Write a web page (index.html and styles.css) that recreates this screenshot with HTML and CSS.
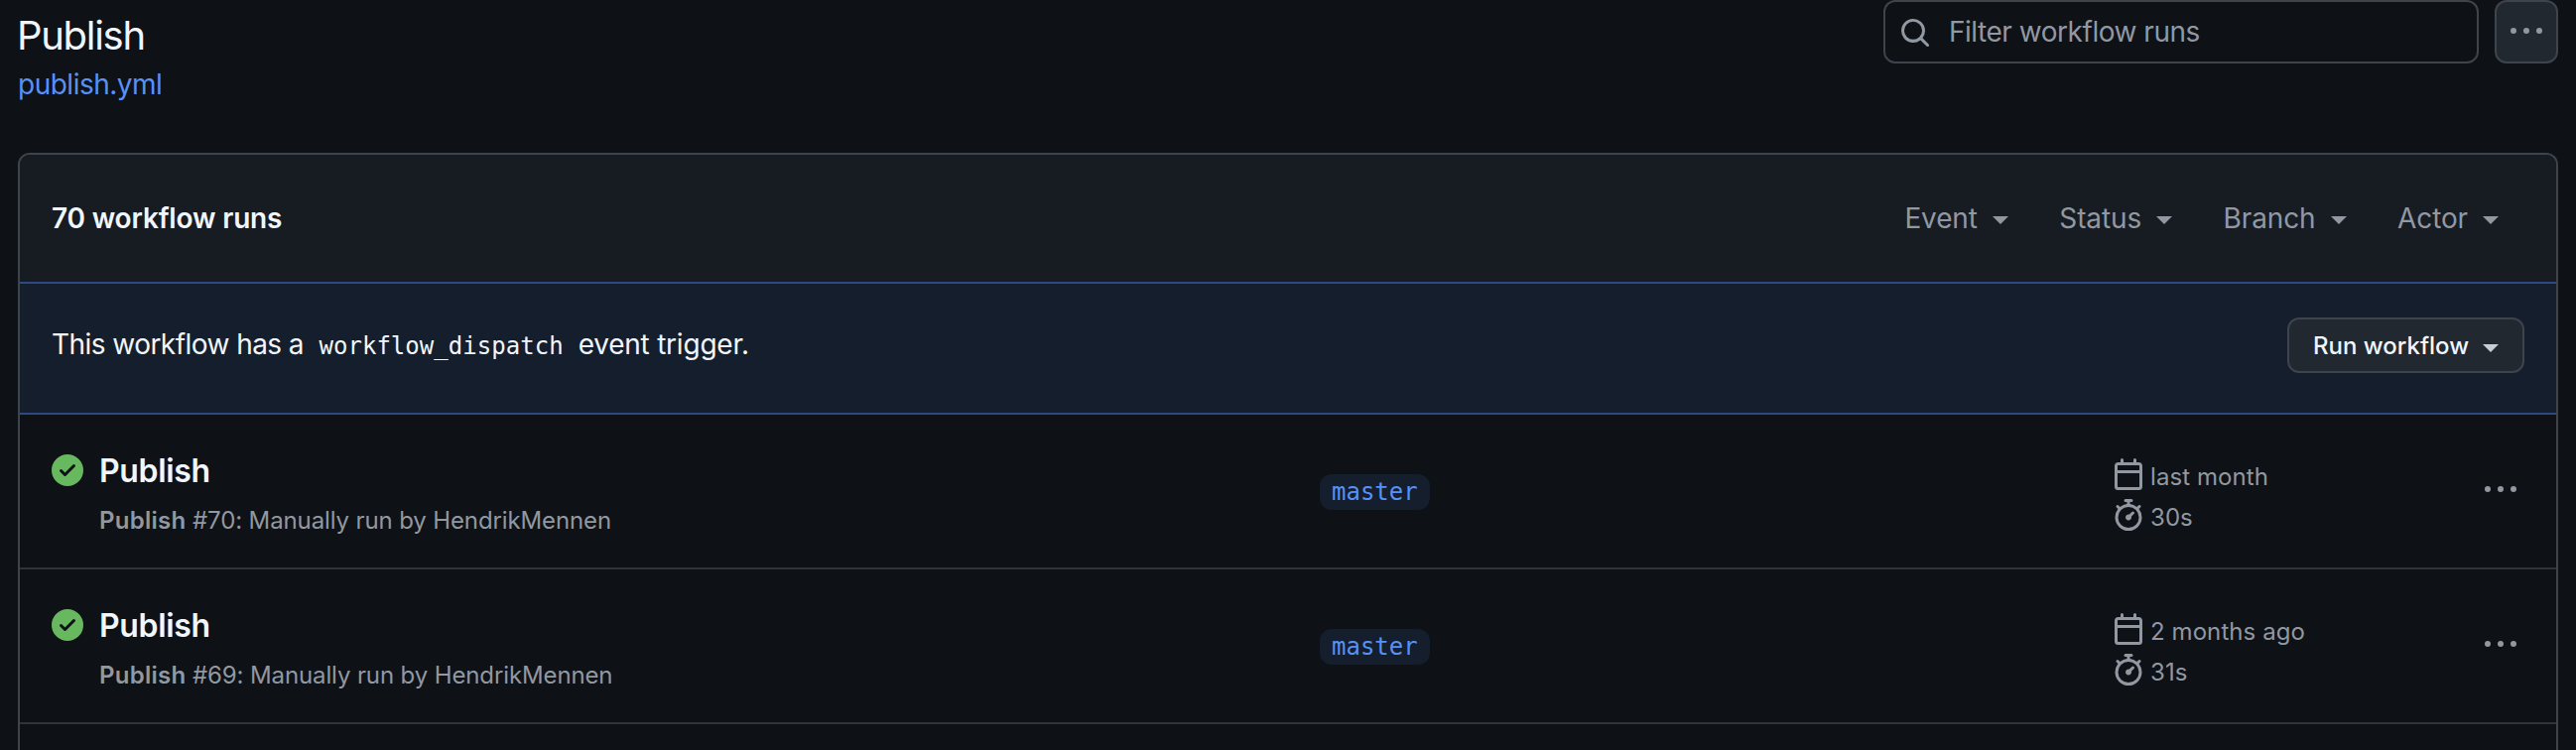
FILE: index.html
```
<!DOCTYPE html>
<html lang="en">
<head>
<meta charset="utf-8">
<title>Publish · Workflow runs</title>
<link rel="stylesheet" href="styles.css">
</head>
<body>
<svg class="sprite" aria-hidden="true">
  <symbol id="i-search" viewBox="0 0 16 16"><path d="M10.68 11.74a6 6 0 0 1-7.922-8.982 6 6 0 0 1 8.982 7.922l3.04 3.04a.749.749 0 0 1-.326 1.275.749.749 0 0 1-.734-.215ZM11.5 7a4.499 4.499 0 1 0-8.997 0A4.499 4.499 0 0 0 11.5 7Z"/></symbol>
  <symbol id="i-dots" viewBox="0 0 16 16"><path d="M8 9a1.5 1.5 0 1 0 0-3 1.5 1.5 0 0 0 0 3ZM1.5 9a1.5 1.5 0 1 0 0-3 1.5 1.5 0 0 0 0 3Zm13 0a1.5 1.5 0 1 0 0-3 1.5 1.5 0 0 0 0 3Z"/></symbol>
  <symbol id="i-check" viewBox="0 0 16 16"><path fill-rule="evenodd" d="M8 16A8 8 0 1 1 8 0a8 8 0 0 1 0 16Zm3.78-9.72a.751.751 0 0 0-.018-1.042.751.751 0 0 0-1.042-.018L6.75 9.19 5.28 7.72a.751.751 0 0 0-1.042.018.751.751 0 0 0-.018 1.042l2 2a.75.75 0 0 0 1.06 0Z"/></symbol>
  <symbol id="i-calendar" viewBox="0 0 16 16"><path d="M4.75 0a.75.75 0 0 1 .75.75V2h5V.75a.75.75 0 0 1 1.5 0V2h1.25c.966 0 1.75.784 1.75 1.75v10.5A1.75 1.75 0 0 1 13.25 16H2.75A1.75 1.75 0 0 1 1 14.25V3.75C1 2.784 1.784 2 2.75 2H4V.75A.75.75 0 0 1 4.75 0ZM2.5 7.5v6.75c0 .138.112.25.25.25h10.5a.25.25 0 0 0 .25-.25V7.5Zm10.75-4H2.75a.25.25 0 0 0-.25.25V6h11V3.75a.25.25 0 0 0-.25-.25Z"/></symbol>
  <symbol id="i-stopwatch" viewBox="0 0 16 16"><path d="M5.75.75A.75.75 0 0 1 6.5 0h3a.75.75 0 0 1 0 1.5h-.75v1l-.001.041a6.724 6.724 0 0 1 3.464 1.435l.007-.006.75-.75a.749.749 0 0 1 1.275.326.749.749 0 0 1-.215.734l-.75.75-.006.007a6.75 6.75 0 1 1-10.548 0L2.72 5.03l-.75-.75a.751.751 0 0 1 .018-1.042.751.751 0 0 1 1.042-.018l.75.75.007.006A6.72 6.72 0 0 1 7.25 2.541V1.5H6.5a.75.75 0 0 1-.75-.75ZM8 14.5a5.25 5.25 0 1 0-.001-10.501A5.25 5.25 0 0 0 8 14.5Zm.389-6.7 1.33-1.33a.75.75 0 1 1 1.061 1.06L9.45 8.861A1.503 1.503 0 0 1 8 10.75a1.499 1.499 0 1 1 .389-2.95Z"/></symbol>
</svg>

<header class="page-head">
  <div class="heading">
    <h1 class="title">Publish</h1>
    <a class="file-link">publish.yml</a>
  </div>
  <div class="search"><svg class="icon"><use href="#i-search"/></svg><span>Filter workflow runs</span></div>
  <button class="more-button"><svg class="icon"><use href="#i-dots"/></svg></button>
</header>

<main class="box">
  <div class="box-head">
    <strong class="count">70 workflow runs</strong>
    <nav class="filters">
      <span class="filter">Event<i class="caret"></i></span>
      <span class="filter">Status<i class="caret"></i></span>
      <span class="filter">Branch<i class="caret"></i></span>
      <span class="filter">Actor<i class="caret"></i></span>
    </nav>
  </div>
  <div class="dispatch">
    <p class="dispatch-text"><span class="lead">This workflow has a</span> <code>workflow_dispatch</code> <span class="tail">event trigger.</span></p>
    <button class="run-button">Run workflow<i class="caret"></i></button>
  </div>
  <article class="run">
    <div class="run-main">
      <svg class="icon check"><use href="#i-check"/></svg>
      <div class="run-info">
        <h2 class="run-title">Publish</h2>
        <p class="run-sub"><b>Publish</b> #70: Manually run by HendrikMennen</p>
      </div>
    </div>
    <span class="branch">master</span>
    <div class="meta">
      <div class="meta-line"><svg class="icon"><use href="#i-calendar"/></svg><span>last month</span></div>
      <div class="meta-line"><svg class="icon"><use href="#i-stopwatch"/></svg><span>30s</span></div>
    </div>
    <svg class="icon run-more"><use href="#i-dots"/></svg>
  </article>
  <article class="run">
    <div class="run-main">
      <svg class="icon check"><use href="#i-check"/></svg>
      <div class="run-info">
        <h2 class="run-title">Publish</h2>
        <p class="run-sub"><b>Publish</b> #69: Manually run by HendrikMennen</p>
      </div>
    </div>
    <span class="branch">master</span>
    <div class="meta">
      <div class="meta-line"><svg class="icon"><use href="#i-calendar"/></svg><span>2 months ago</span></div>
      <div class="meta-line"><svg class="icon"><use href="#i-stopwatch"/></svg><span>31s</span></div>
    </div>
    <svg class="icon run-more"><use href="#i-dots"/></svg>
  </article>
</main>
</body>
</html>
```
FILE: styles.css
```
* { box-sizing: border-box; }

body {
  margin: 0;
  height: 756px;
  display: flex;
  flex-direction: column;
  padding: 0 18px;
  background: #0e1116;
  color: #f0f6fc;
  font-family: Inter, "Noto Sans", sans-serif;
  font-size: 28px;
  white-space: nowrap;
}

h1, h2, p { margin: 0; }

button {
  font: inherit;
  color: inherit;
  padding: 0;
}

.sprite { display: none; }

.icon {
  flex: none;
  width: 32px;
  height: 32px;
  fill: #9198a1;
}

.caret {
  flex: none;
  border: 8px solid transparent;
  border-top-color: currentColor;
  border-bottom: 0;
}

.page-head {
  flex: none;
  height: 154px;
  display: flex;
  align-items: flex-start;
  gap: 16px;
}

.heading {
  flex: 1;
  padding-top: 7px;
}

.title {
  margin-left: -1px;
  font-size: 40px;
  font-weight: 400;
  line-height: 57px;
  letter-spacing: -1.3px;
}

.file-link {
  display: block;
  line-height: 42px;
  letter-spacing: -0.5px;
  color: #5891f6;
}

.search {
  width: 600px;
  height: 64px;
  display: flex;
  align-items: center;
  gap: 18px;
  padding: 2px 0 0 14px;
  border: 2px solid #3e444c;
  border-radius: 12px;
  color: #9198a1;
  line-height: 60px;
  letter-spacing: -0.47px;
}

.search span { margin-top: -2px; }

.more-button {
  width: 64px;
  height: 64px;
  display: flex;
  align-items: center;
  justify-content: center;
  background: #22282f;
  border: 2px solid #3e444c;
  border-radius: 12px;
}

.box {
  flex: none;
  height: 602px;
  border: 2px solid #3e444c;
  border-bottom: 0;
  border-radius: 12px 12px 0 0;
  overflow: hidden;
}

.box-head {
  height: 128px;
  display: flex;
  align-items: center;
  justify-content: space-between;
  padding: 0 58px 0 32px;
  background: #171b22;
}

.count {
  font-weight: 600;
  letter-spacing: -0.17px;
}

.filters {
  display: flex;
  gap: 51.5px;
  color: #9198a1;
}

.filter {
  display: flex;
  align-items: center;
  gap: 15px;
  letter-spacing: -0.12px;
}

.filter .caret { margin-top: 4px; }

.dispatch {
  height: 134px;
  display: flex;
  align-items: flex-start;
  justify-content: space-between;
  padding: 34px 32px 0;
  background: #151e2c;
  border-top: 2px solid #2f4a80;
  border-bottom: 2px solid #2f4a80;
}

.dispatch-text {
  padding-top: 6px;
  line-height: 42px;
}

.lead { letter-spacing: -0.55px; }
.tail { letter-spacing: -0.22px; }

.dispatch-text code {
  padding: 0 7px 0 7.5px;
  font-family: "DejaVu Sans Mono", monospace;
  font-size: 24px;
  letter-spacing: 0.04px;
}

.run-button {
  width: 239px;
  height: 56px;
  display: flex;
  align-items: center;
  justify-content: space-between;
  padding: 0 24px;
  background: #22282f;
  border: 2px solid #3e444c;
  border-radius: 12px;
  font-size: 24px;
  font-weight: 500;
}

.run-button .caret {
  margin-top: 6px;
  color: #c9cdd2;
}

.run {
  height: 156px;
  display: grid;
  grid-template-columns: 1278px 799px 375px 32px;
  align-items: start;
  padding-left: 32px;
  border-bottom: 2px solid #2f343a;
}

.run-main {
  display: flex;
  gap: 16px;
  padding-top: 40px;
}

.icon.check { fill: #67b85f; }

.run-title {
  padding-top: 1px;
  font-size: 32px;
  font-weight: 600;
  line-height: 32px;
  letter-spacing: -0.35px;
}

.run-sub {
  margin-top: 16px;
  font-size: 24px;
  line-height: 36px;
  letter-spacing: -0.12px;
  color: #9198a1;
}

.run-sub b {
  font-weight: 600;
  letter-spacing: 0.25px;
}

.branch {
  justify-self: start;
  margin-top: 60px;
  height: 36px;
  padding: 0 12px;
  border-radius: 12px;
  background: #151e2c;
  color: #5891f6;
  font-family: "DejaVu Sans Mono", monospace;
  font-size: 24px;
  line-height: 36px;
}

.meta {
  padding-top: 44px;
  font-size: 24px;
  line-height: 37px;
  letter-spacing: 0.08px;
  color: #9198a1;
}

.meta-line {
  height: 41px;
  display: flex;
  gap: 6px;
}

.run-more { margin-top: 60px; }
```
